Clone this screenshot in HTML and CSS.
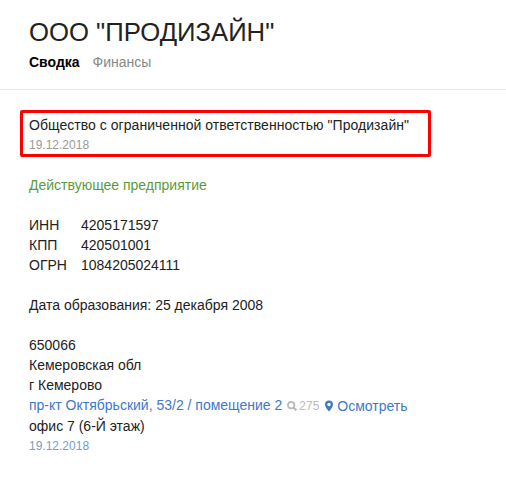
FILE: index.html
```html
<!DOCTYPE html>
<html lang="ru">
<head>
<meta charset="utf-8">
<title>ООО "ПРОДИЗАЙН"</title>
<link rel="stylesheet" href="styles.css">
</head>
<body>
<header class="head">
  <h1 class="title">ООО "ПРОДИЗАЙН"</h1>
  <nav class="tabs"><b class="tab-on">Сводка</b><span class="tab">Финансы</span></nav>
</header>
<main class="main">
  <section class="name-box">
    <div class="full-name">Общество с ограниченной ответственностью "Продизайн"</div>
    <div class="date">19.12.2018</div>
  </section>
  <p class="status">Действующее предприятие</p>
  <dl class="codes">
    <dt>ИНН</dt><dd>4205171597</dd>
    <dt>КПП</dt><dd>420501001</dd>
    <dt>ОГРН</dt><dd>1084205024111</dd>
  </dl>
  <p class="block">Дата образования: 25 декабря 2008</p>
  <address class="addr">
    <div>650066</div>
    <div>Кемеровская обл</div>
    <div>г Кемерово</div>
    <div class="link-row"><a class="link">пр-кт Октябрьский, 53/2 / помещение 2</a>
      <span class="count"><svg class="ic-search" viewBox="0 0 10 10"><circle cx="4.2" cy="4.2" r="3.2" fill="none" stroke="currentColor" stroke-width="1.8"/><path d="M6.400 6.400L9.400 9.400" stroke="currentColor" stroke-width="2.1"/></svg>275</span>
      <a class="link view"><svg class="ic-pin" viewBox="0 0 10 14"><path fill-rule="evenodd" d="M5 0a5 5 0 0 1 5 5c0 3-3 6.500-5 9-2-2.500-5-6-5-9a5 5 0 0 1 5-5zM5 2.800a2.200 2.200 0 1 0 0 4.400 2.200 2.200 0 0 0 0-4.400z" fill="currentColor"/></svg>Осмотреть</a>
    </div>
    <div>офис 7 (6-Й этаж)</div>
    <div class="date-blue">19.12.2018</div>
  </address>
</main>
</body>
</html>
```
FILE: styles.css
```css
* { box-sizing: border-box; }
html, body { margin: 0; padding: 0; background: #fff; }
body {
  font-family: "Liberation Sans", Arial, sans-serif;
  font-size: 14px;
  line-height: 20px;
  color: #222;
  width: 506px;
  height: 478px;
  overflow: hidden;
}
.head {
  height: 90px;
  padding: 16px 29px 0;
  border-bottom: 1px solid #e7e7e7;
}
.title {
  margin: 0;
  font-size: 25.7px;
  line-height: 32px;
  font-weight: 400;
  color: #222;
}
.tabs { display: flex; gap: 13px; margin-top: 4px; }
.tab-on { color: #000; font-weight: 700; }
.tab { color: #888; }
.main { padding: 20px 29px 0; }
.name-box {
  width: 411px;
  height: 47px;
  margin-left: -9px;
  padding: 2px 0 0 6px;
  border: 3px solid #f00;
  border-radius: 2px;
}
.full-name { letter-spacing: 0.04px; }
.date { font-size: 12px; line-height: 20px; color: #999; }
.status { margin: 18px 0 0; color: #5b9a3c; }
.codes {
  display: grid;
  grid-template-columns: 52px 1fr;
  margin: 20px 0 0;
}
.codes dt, .codes dd { margin: 0; }
.block { margin: 20px 0 0; }
.addr { margin-top: 20px; font-style: normal; }
.link { color: #3f78c9; }
.link-row { display: flex; white-space: pre; height: 21px; }
.count {
  display: inline-flex;
  align-items: center;
  margin-left: 5px;
  font-size: 12px;
  color: #bbb;
}
.ic-search { width: 10px; height: 10px; margin-right: 2px; }
.view { display: inline-flex; align-items: center; margin-left: 6px; }
.ic-pin { width: 8px; height: 12px; margin-right: 4px; }
.date-blue { font-size: 12px; color: #7a9cc6; }
```
